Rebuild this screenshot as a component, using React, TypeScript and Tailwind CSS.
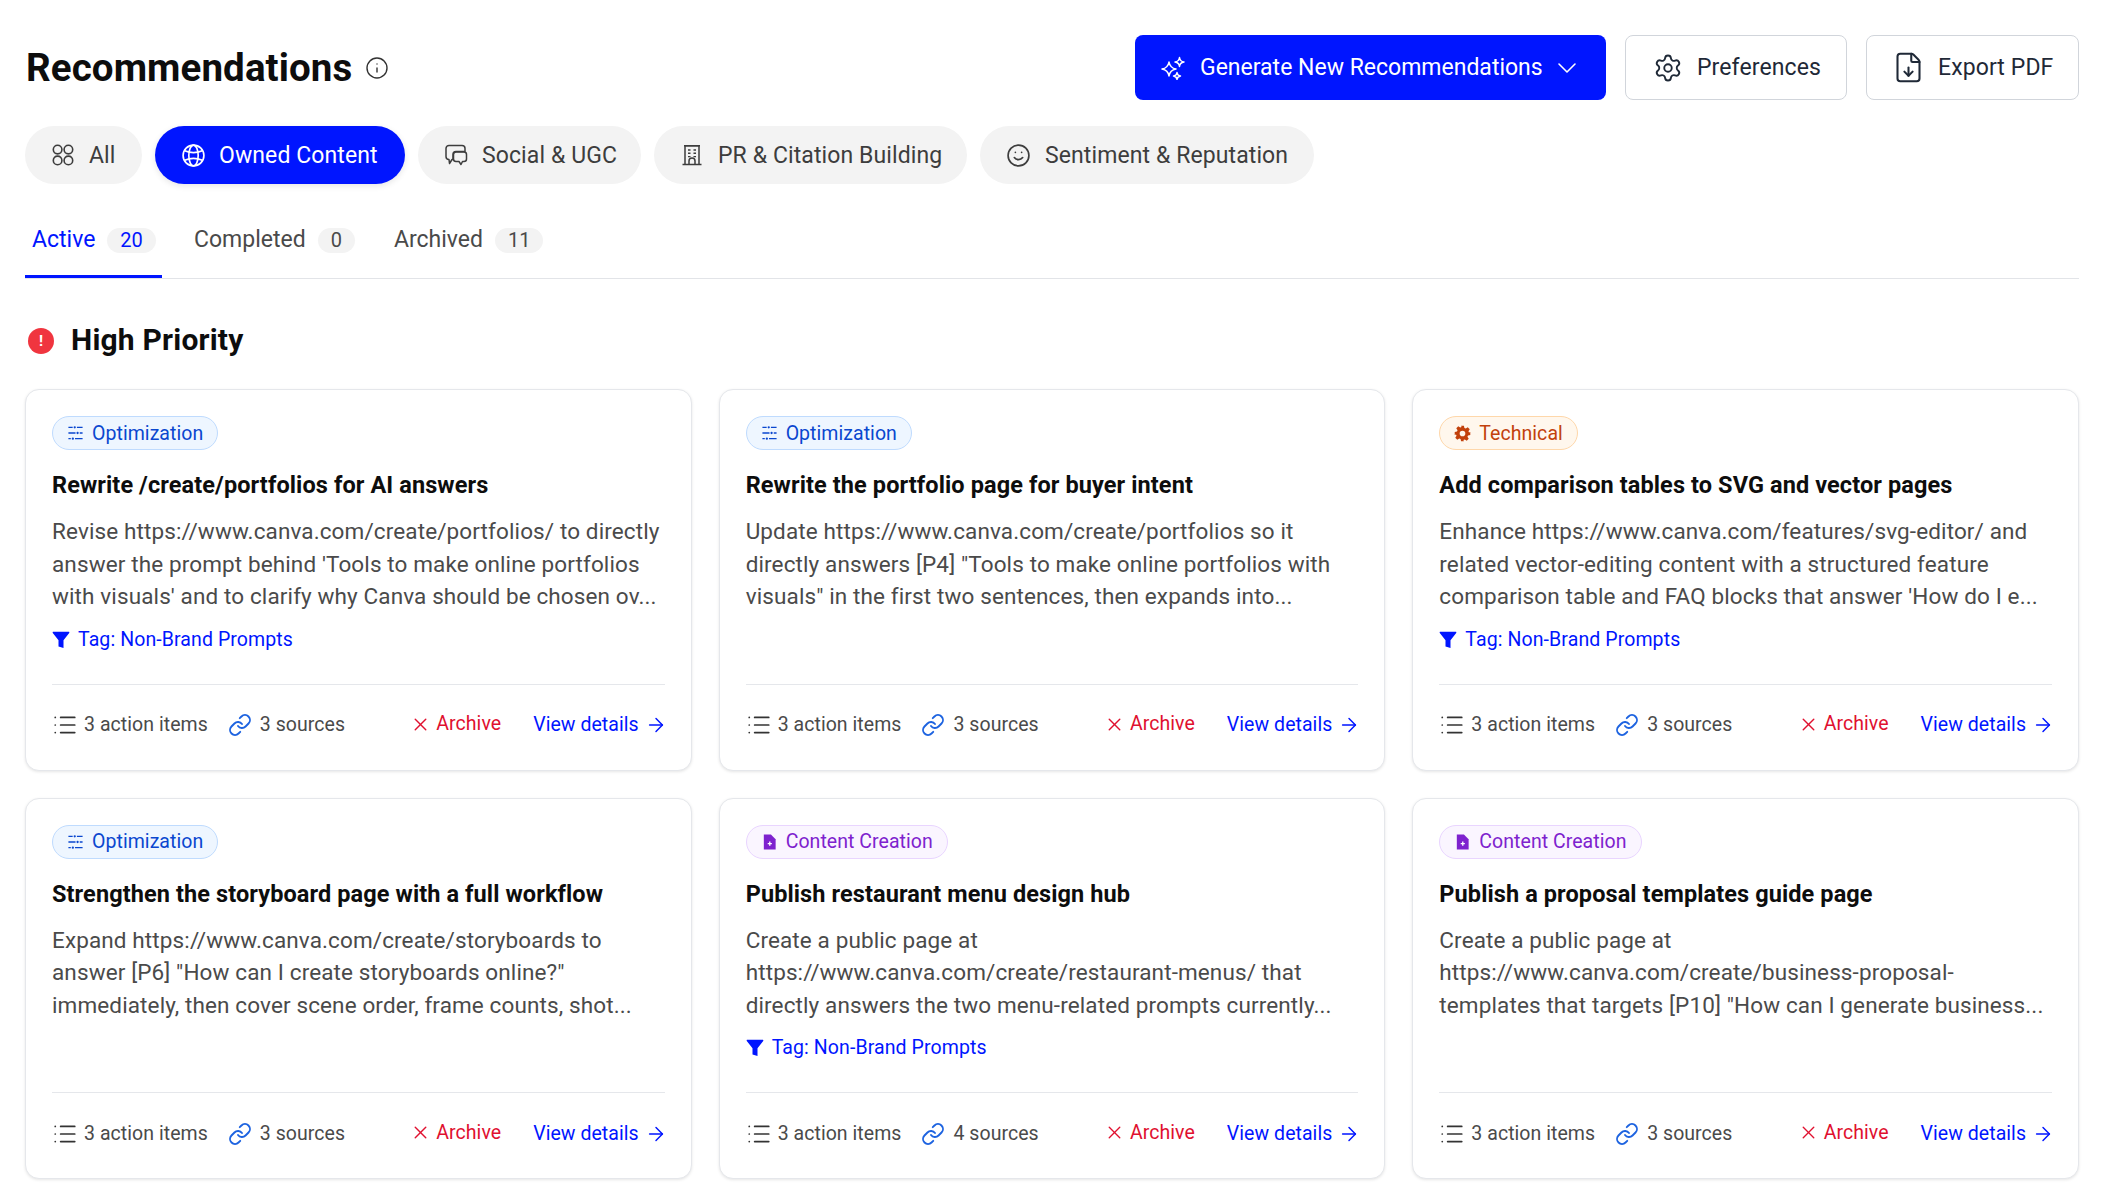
import React from "react";
import { Smile, ChevronDown, Settings, FileDown, Info, List, Link, X, ArrowRight } from "lucide-react";

function FourCircles() {
  return (
    <svg width="24" height="24" viewBox="0 0 24 24" fill="none" stroke="currentColor" strokeWidth="1.6">
      <circle cx="6.6" cy="6.6" r="4.3" />
      <circle cx="17.400" cy="6.6" r="4.3" />
      <circle cx="6.6" cy="17.400" r="4.3" />
      <circle cx="17.400" cy="17.400" r="4.3" />
    </svg>
  );
}

function GlobeIcon() {
  return (
    <svg width="25" height="25" viewBox="0 0 24 24" fill="none" stroke="currentColor" strokeWidth="1.6">
      <circle cx="12" cy="12" r="10" />
      <ellipse cx="12" cy="12" rx="4.500" ry="10" />
      <path d="M3.500 7.500Q12 11 20.500 7.500M3.500 16.500Q12 13 20.500 16.500" />
    </svg>
  );
}

function BubblesIcon() {
  return (
    <svg width="24" height="24" viewBox="0 0 24 24" fill="none" stroke="currentColor" strokeWidth="1.5" strokeLinejoin="round">
      <path d="M5 2.500h13a3 3 0 013 3v3H12a3 3 0 00-3 3v5H8l-2.500 4-.5-4a3 3 0 01-3-3v-8a3 3 0 013-3z" />
      <path d="M12 9h8a2.500 2.500 0 012.500 2.500v4.500a2.500 2.500 0 01-2.500 2.500h-1.500l-1.500 3-2-3H12a2.500 2.500 0 01-2.500-2.500v-4.500A2.500 2.500 0 0112 9z" />
    </svg>
  );
}

function BuildingIcon() {
  return (
    <svg width="24" height="24" viewBox="0 0 24 24" fill="none" stroke="currentColor" strokeWidth="1.5">
      <path d="M5 21.500V3h14v18.500M2.500 21.500h19M4 2.800h16" />
      <path d="M9 21.500v-3.500a3 3 0 016 0v3.500" />
      <path d="M8 7h2.500M13.500 7H16M8 10.300h2.500M13.500 10.300H16M8 13.600h2.500M13.500 13.600H16" strokeWidth="1.400" />
    </svg>
  );
}

function SparkIcon() {
  return (
    <svg width="24" height="24" viewBox="0 0 24 24" fill="none" stroke="currentColor" strokeWidth="1.5" strokeLinejoin="round">
      <path d="M8 6Q9 12 15 13 9 14 8 20 7 14 1 13 7 12 8 6z" />
      <path d="M18.500 1.500Q19 5.500 23 6 19 6.500 18.500 10.500 18 6.500 14 6 18 5.500 18.500 1.500z" />
      <path d="M16 16.500Q16.400 19.600 19.500 20 16.400 20.400 16 23.500 15.600 20.400 12.500 20 15.600 19.600 16 16.500z" />
    </svg>
  );
}

function Funnel() {
  return (
    <svg width="18" height="18" viewBox="0 0 18 18" fill="currentColor">
      <path d="M1.300 .8h15.400c.6 0 .9.7.5 1.200L11.500 9.200V17L6.500 15.500V9.200L.8 2C.4 1.500.7.800 1.300.8z" />
    </svg>
  );
}

function Cog() {
  return (
    <svg width="17" height="17" viewBox="0 0 24 24" fill="currentColor">
      <path fillRule="evenodd" d="M10 1h4l.7 3.200 1.900.8 2.800-1.800 2.800 2.800-1.800 2.800.8 1.900L23 10v4l-3.200.7-.8 1.900 1.800 2.800-2.800 2.800-2.800-1.800-1.900.8L14 23h-4l-.7-3.200-1.900-.8-2.800 1.800-2.800-2.800 1.800-2.800-.8-1.900L1 14v-4l3.200-.7.8-1.900-1.800-2.800 2.800-2.800 2.800 1.800 1.900-.8zM12 8a4 4 0 100 8 4 4 0 000-8z" />
    </svg>
  );
}

function FilePlusSolid() {
  return (
    <svg width="17" height="18" viewBox="0 0 18 18">
      <path fill="currentColor" d="M3 1h7.500L15.500 6v11H3z" />
      <path stroke="#fff" strokeWidth="1.400" d="M9.300 8.500v4.400M7.100 10.700h4.400" />
    </svg>
  );
}

function TuneIcon() {
  return (
    <svg width="17" height="18" viewBox="0 0 18 18" fill="none" stroke="currentColor" strokeWidth="1.400">
      <path d="M1.500 3H6M10.500 3h6M1.500 9H9M13.500 9h3M1.500 15H4M8.500 15h8" />
      <circle cx="8.200" cy="3" r="1.200" fill="currentColor" stroke="none" />
      <circle cx="11.200" cy="9" r="1.200" fill="currentColor" stroke="none" />
      <circle cx="6.200" cy="15" r="1.200" fill="currentColor" stroke="none" />
    </svg>
  );
}

const badgeStyles: Record<string, string> = {
  Optimization: "bg-[#eef6ff] border-[#bfdbfe] text-[#0a47cf]",
  Technical: "bg-[#fff7ed] border-[#fed7aa] text-[#c2410c]",
  "Content Creation": "bg-[#faf5ff] border-[#e9d5ff] text-[#7e22ce]",
};

function Badge({ kind }: { kind: string }) {
  const icon = kind === "Optimization" ? <TuneIcon /> : kind === "Technical" ? <Cog /> : <FilePlusSolid />;
  return (
    <span className={`inline-flex h-[34px] items-center gap-[8px] self-start rounded-full border px-[14px] text-[19.5px] tracking-[0.05px] ${badgeStyles[kind]}`}>
      {icon}
      <span className="mt-[1px]">{kind}</span>
    </span>
  );
}

type CardData = { kind: string; title: string; lines: string[]; tag?: boolean; sources: number };

function Card({ kind, title, lines, tag, sources }: CardData) {
  return (
    <div className="flex h-[381.5px] flex-col rounded-[14px] border border-[#e5e7eb] bg-white px-[26px] pt-[26px] shadow-[0_1px_3px_rgba(0,0,0,0.1)]">
      <Badge kind={kind} />
      <h3 className="mt-[20px] text-[23.5px] leading-[30px] font-bold tracking-[0.1px] text-[#0d0d0d]">{title}</h3>
      <div className="mt-[15px] text-[22.5px] leading-[32.5px] tracking-[0.12px] text-[#4a4a4a]">
        {lines.map((l) => (
          <div key={l} className="whitespace-nowrap">{l}</div>
        ))}
      </div>
      {tag && (
        <div className="mt-[12px] flex h-[30px] items-center gap-[8px] text-[19.5px] tracking-[0.1px] text-[#0015ff]">
          <Funnel />
          Tag: Non-Brand Prompts
        </div>
      )}
      <div className="mt-auto flex h-[86px] items-center border-t border-[#e5e7eb] pb-[4px] text-[19.5px] tracking-[0.05px] text-[#4a4a4a]">
        <span className="flex items-center gap-[6px]">
          <List size={26} strokeWidth={1.6} className="text-[#333]" />
          3 action items
        </span>
        <span className="ml-[20px] flex items-center gap-[8px]">
          <Link size={24} strokeWidth={1.9} className="text-[#1d63e0]" />
          {sources} sources
        </span>
        <span className="ml-auto -mt-[2px] flex items-center gap-[5px] text-[#e0102f]">
          <X size={21} strokeWidth={1.6} />
          Archive
        </span>
        <span className="-mr-[2px] ml-[32px] flex items-center gap-[6px] text-[#0015ff]">
          View details
          <ArrowRight size={22} strokeWidth={1.6} />
        </span>
      </div>
    </div>
  );
}

const cards: CardData[] = [
  { kind: "Optimization", title: "Rewrite /create/portfolios for AI answers", lines: ["Revise https://www.canva.com/create/portfolios/ to directly", "answer the prompt behind 'Tools to make online portfolios", "with visuals' and to clarify why Canva should be chosen ov..."], tag: true, sources: 3 },
  { kind: "Optimization", title: "Rewrite the portfolio page for buyer intent", lines: ["Update https://www.canva.com/create/portfolios so it", "directly answers [P4] \"Tools to make online portfolios with", "visuals\" in the first two sentences, then expands into..."], sources: 3 },
  { kind: "Technical", title: "Add comparison tables to SVG and vector pages", lines: ["Enhance https://www.canva.com/features/svg-editor/ and", "related vector-editing content with a structured feature", "comparison table and FAQ blocks that answer 'How do I e..."], tag: true, sources: 3 },
  { kind: "Optimization", title: "Strengthen the storyboard page with a full workflow", lines: ["Expand https://www.canva.com/create/storyboards to", "answer [P6] \"How can I create storyboards online?\"", "immediately, then cover scene order, frame counts, shot..."], sources: 3 },
  { kind: "Content Creation", title: "Publish restaurant menu design hub", lines: ["Create a public page at", "https://www.canva.com/create/restaurant-menus/ that", "directly answers the two menu-related prompts currently..."], tag: true, sources: 4 },
  { kind: "Content Creation", title: "Publish a proposal templates guide page", lines: ["Create a public page at", "https://www.canva.com/create/business-proposal-", "templates that targets [P10] \"How can I generate business..."], sources: 3 },
];

const pills = [
  { label: "All", icon: <FourCircles />, w: "w-[117px]" },
  { label: "Owned Content", icon: <GlobeIcon />, w: "w-[250px]", active: true },
  { label: "Social & UGC", icon: <BubblesIcon />, w: "w-[223px]" },
  { label: "PR & Citation Building", icon: <BuildingIcon />, w: "w-[313px]" },
  { label: "Sentiment & Reputation", icon: <Smile size={25} strokeWidth={1.6} />, w: "w-[334px]" },
];

const tabs = [
  { label: "Active", n: 20, active: true },
  { label: "Completed", n: 0 },
  { label: "Archived", n: 11 },
];

export default function App() {
  return (
    <div className="min-h-[1200px] overflow-hidden bg-white pt-[35px] pr-[23px] pl-[25px] font-['Roboto',sans-serif]">
      <header className="flex h-[65px] items-center">
        <h1 className="ml-[1px] text-[38.5px] font-bold tracking-[0.1px] text-[#0d0d0d]">Recommendations</h1>
        <Info size={24} strokeWidth={1.4} className="ml-[13px] text-[#333]" />
        <div className="ml-auto flex gap-[19px] text-[23px]">
          <button className="flex h-[65px] w-[471px] items-center gap-[15px] rounded-[8px] bg-[#0015ff] pl-[26px] text-white">
            <SparkIcon />
            <span className="mt-[2px]">Generate New Recommendations</span>
            <ChevronDown size={32} strokeWidth={1.2} className="-ml-[7px]" />
          </button>
          <button className="flex h-[65px] w-[222px] items-center gap-[14px] rounded-[8px] border border-[#d1d5db] bg-white pl-[27px] tracking-[0.1px] text-[#1f2937]">
            <Settings size={30} strokeWidth={1.5} />
            <span className="mt-[2px]">Preferences</span>
          </button>
          <button className="flex h-[65px] w-[213px] items-center gap-[13px] rounded-[8px] border border-[#d1d5db] bg-white pl-[25px] tracking-[0.1px] text-[#1f2937]">
            <FileDown size={33} strokeWidth={1.5} />
            <span className="mt-[2px]">Export PDF</span>
          </button>
        </div>
      </header>

      <nav className="mt-[26px] flex gap-[13px] text-[23px] tracking-[0.1px]">
        {pills.map((p) => (
          <div
            key={p.label}
            className={p.active
              ? `flex h-[58px] ${p.w} items-center gap-[13px] rounded-full bg-[#0015ff] pl-[26px] text-white shadow-[0_2px_6px_rgba(0,0,0,0.1)]`
              : `flex h-[58px] ${p.w} items-center gap-[14px] rounded-full bg-[#f3f3f3] pl-[26px] text-[#3d3d3d]`}
          >
            {p.icon}
            <span className="mt-[2px]">{p.label}</span>
          </div>
        ))}
      </nav>

      <div className="mt-[37px] flex h-[58px] items-start border-b border-[#e2e4e8]">
        {tabs.map((t) => (
          <div
            key={t.label}
            className={t.active
              ? "flex h-[57px] w-[137px] items-center gap-[12px] border-b-[3px] border-[#0015ff] pb-[16px] pl-[7px] text-[23px] text-[#0015ff]"
              : "ml-[32px] mr-[7px] flex h-[57px] items-center gap-[12px] pb-[19px] text-[23px] text-[#4a4a4a]"}
          >
            <span className="leading-[30px]">{t.label}</span>
            <span className={`flex h-[25px] items-center rounded-full bg-[#f3f3f3] px-[13px] text-[20px] ${t.active ? "text-[#0015ff]" : "text-[#4a4a4a]"}`}>{t.n}</span>
          </div>
        ))}
      </div>

      <div className="mt-[44px] flex h-[36px] items-center gap-[17px]">
        <span className="ml-[3px] flex h-[26px] w-[26px] items-center justify-center rounded-full bg-[#f0353f] text-[15px] font-bold text-white">!</span>
        <h2 className="mb-[4px] text-[30px] font-bold tracking-[0.2px] text-[#0d0d0d]">High Priority</h2>
      </div>

      <div className="mt-[30px] grid grid-cols-3 gap-[27px]">
        {cards.map((c) => (
          <Card key={c.title} {...c} />
        ))}
      </div>
    </div>
  );
}
